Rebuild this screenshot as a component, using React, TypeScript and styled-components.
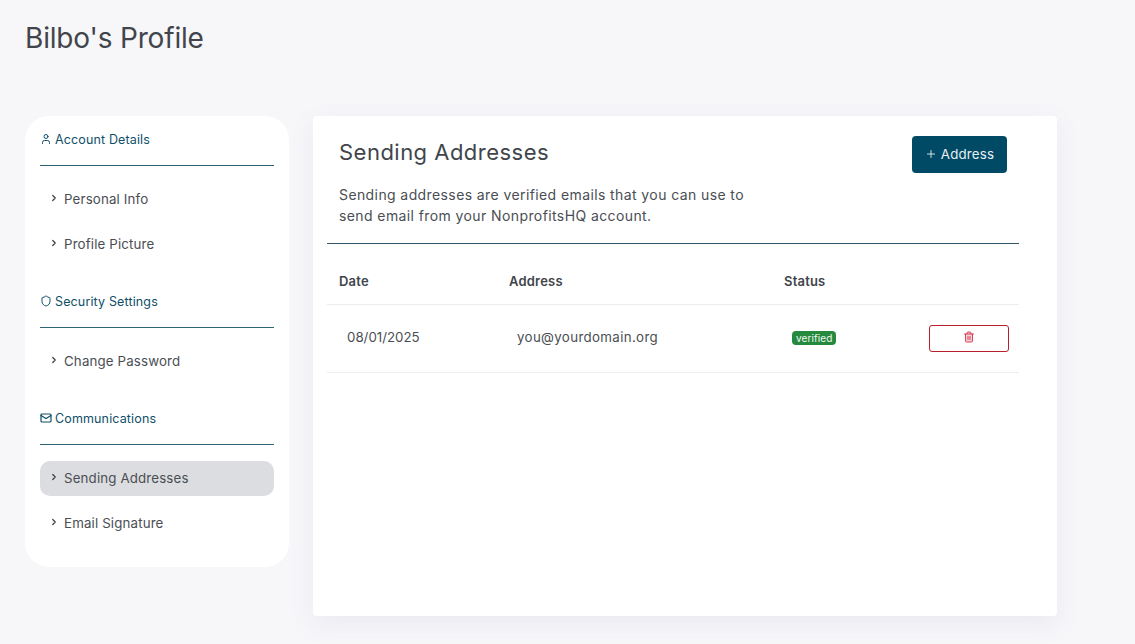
import React from 'react'
import styled, { createGlobalStyle } from 'styled-components'
import { ChevronRight, Mail, Plus, Shield, Trash2, User } from 'lucide-react'

const GlobalStyle = createGlobalStyle`
  html, body {
    margin: 0;
    padding: 0;
    background: #f7f7fa;
    font-family: Inter, "Liberation Sans", sans-serif;
    color: #3f4349;
  }
  * { box-sizing: border-box; }
`

const Page = styled.div`
  width: 1135px;
  height: 644px;
  overflow: hidden;
  padding: 18px 0 0 25px;
`

const PageTitle = styled.h1`
  margin: 0 0 58px;
  height: 40px;
  font-size: 28px;
  line-height: 40px;
  font-weight: 400;
  letter-spacing: -0.18px;
  color: #41454b;
`

const Columns = styled.div`
  display: flex;
  align-items: flex-start;
  gap: 24px;
`

const Sidebar = styled.nav`
  width: 264px;
  height: 451px;
  padding: 15px 15px 0;
  background: #fff;
  border-radius: 24px;
`

const Section = styled.div<{ $gap: number }>`
  margin-bottom: ${({ $gap }) => $gap}px;
`

const SectionHeader = styled.div`
  display: flex;
  align-items: center;
  gap: 3px;
  height: 35px;
  padding-bottom: 16px;
  border-bottom: 1px solid #2f6476;
  margin-bottom: 16px;
  font-size: 12.5px;
  line-height: 18px;
  letter-spacing: 0.14px;
  color: #0f5068;
  svg { margin-top: -2px; }
`

const NavItem = styled.div<{ $active?: boolean }>`
  display: flex;
  align-items: center;
  gap: 5px;
  height: 35px;
  padding: 0 0 2px 9px;
  margin-bottom: 10px;
  border-radius: 10px;
  font-size: 13.3px;
  letter-spacing: 0.15px;
  color: #4a4e54;
  background: ${({ $active }) => ($active ? '#dcdde0' : 'transparent')};
  &:last-child { margin-bottom: 0; }
  svg { margin-top: -2px; color: #3f4349; }
`

const Panel = styled.main`
  width: 744px;
  height: 500px;
  padding: 20px 38px 0 14px;
  background: #fff;
  border-radius: 4px;
  box-shadow: 0 8px 24px rgba(120, 120, 160, 0.1);
`

const PanelTop = styled.div`
  display: flex;
  justify-content: space-between;
  align-items: flex-start;
  height: 108px;
  padding: 0 12px;
  border-bottom: 1px solid #34566a;
`

const Intro = styled.div`
  width: 430px;
`

const PanelTitle = styled.h2`
  margin: 0 0 18px;
  height: 33px;
  font-size: 22px;
  line-height: 33px;
  font-weight: 400;
  letter-spacing: 0.48px;
  color: #41454b;
`

const Description = styled.p`
  margin: -3px 0 0;
  font-size: 14px;
  line-height: 21px;
  letter-spacing: 0.4px;
  color: #4a4e54;
`

const AddButton = styled.button`
  display: flex;
  align-items: center;
  justify-content: center;
  gap: 4px;
  width: 95px;
  height: 37px;
  padding: 0 0 1px;
  border: none;
  border-radius: 4px;
  background: #004a66;
  color: #e8f0f3;
  font-family: inherit;
  font-size: 13.3px;
  letter-spacing: 0.2px;
`

const Row = styled.div<{ $height: number }>`
  display: grid;
  grid-template-columns: 170px 275px 1fr 90px;
  align-items: center;
  height: ${({ $height }) => $height}px;
  padding-left: 12px;
  border-bottom: 1px solid #ecedf0;
`

const HeadCell = styled.div`
  padding-top: 14px;
  font-size: 13px;
  font-weight: 600;
  color: #41454b;
  letter-spacing: 0.2px;
`

const Cell = styled.div<{ $tracking?: number }>`
  padding: 0 0 4px 8px;
  font-size: 13.3px;
  letter-spacing: ${({ $tracking = 0.12 }) => $tracking}px;
  color: #4a4e54;
`

const Badge = styled.span`
  display: inline-block;
  padding: 0 4px;
  height: 14px;
  border-radius: 4px;
  background: #268a3e;
  color: #f0f8f2;
  font-size: 10px;
  line-height: 14px;
  letter-spacing: 0.1px;
  vertical-align: middle;
`

const DeleteButton = styled.button`
  display: flex;
  align-items: flex-start;
  justify-content: center;
  width: 80px;
  height: 27px;
  padding: 5px 0 0;
  background: #fff;
  border: 1px solid #b9202c;
  border-radius: 3px;
  color: #d8455a;
`

const sections = [
  { title: 'Account Details', Icon: User, iconWeight: 2, gap: 31, items: ['Personal Info', 'Profile Picture'] },
  { title: 'Security Settings', Icon: Shield, iconWeight: 2, gap: 31, items: ['Change Password'] },
  { title: 'Communications', Icon: Mail, iconWeight: 2.4, gap: 0, items: ['Sending Addresses', 'Email Signature'] },
]

export default function App() {
  return (
    <Page>
      <GlobalStyle />
      <PageTitle>Bilbo's Profile</PageTitle>
      <Columns>
        <Sidebar>
          {sections.map(({ title, Icon, iconWeight, gap, items }) => (
            <Section key={title} $gap={gap}>
              <SectionHeader>
                <Icon size={12} strokeWidth={iconWeight} />
                {title}
              </SectionHeader>
              {items.map((item) => (
                <NavItem key={item} $active={item === 'Sending Addresses'}>
                  <ChevronRight size={10} strokeWidth={3} />
                  {item}
                </NavItem>
              ))}
            </Section>
          ))}
        </Sidebar>
        <Panel>
          <PanelTop>
            <Intro>
              <PanelTitle>Sending Addresses</PanelTitle>
              <Description>
                Sending addresses are verified emails that you can use to
                <br />
                send email from your NonprofitsHQ account.
              </Description>
            </Intro>
            <AddButton>
              <Plus size={12} strokeWidth={1.8} />
              Address
            </AddButton>
          </PanelTop>
          <Row $height={61}>
            <HeadCell>Date</HeadCell>
            <HeadCell>Address</HeadCell>
            <HeadCell>Status</HeadCell>
            <HeadCell />
          </Row>
          <Row $height={68}>
            <Cell $tracking={0}>08/01/2025</Cell>
            <Cell $tracking={0.35}>you@yourdomain.org</Cell>
            <Cell>
              <Badge>verified</Badge>
            </Cell>
            <DeleteButton aria-label="Delete">
              <Trash2 size={12} strokeWidth={2} fill="rgba(216, 69, 90, 0.25)" />
            </DeleteButton>
          </Row>
        </Panel>
      </Columns>
    </Page>
  )
}
